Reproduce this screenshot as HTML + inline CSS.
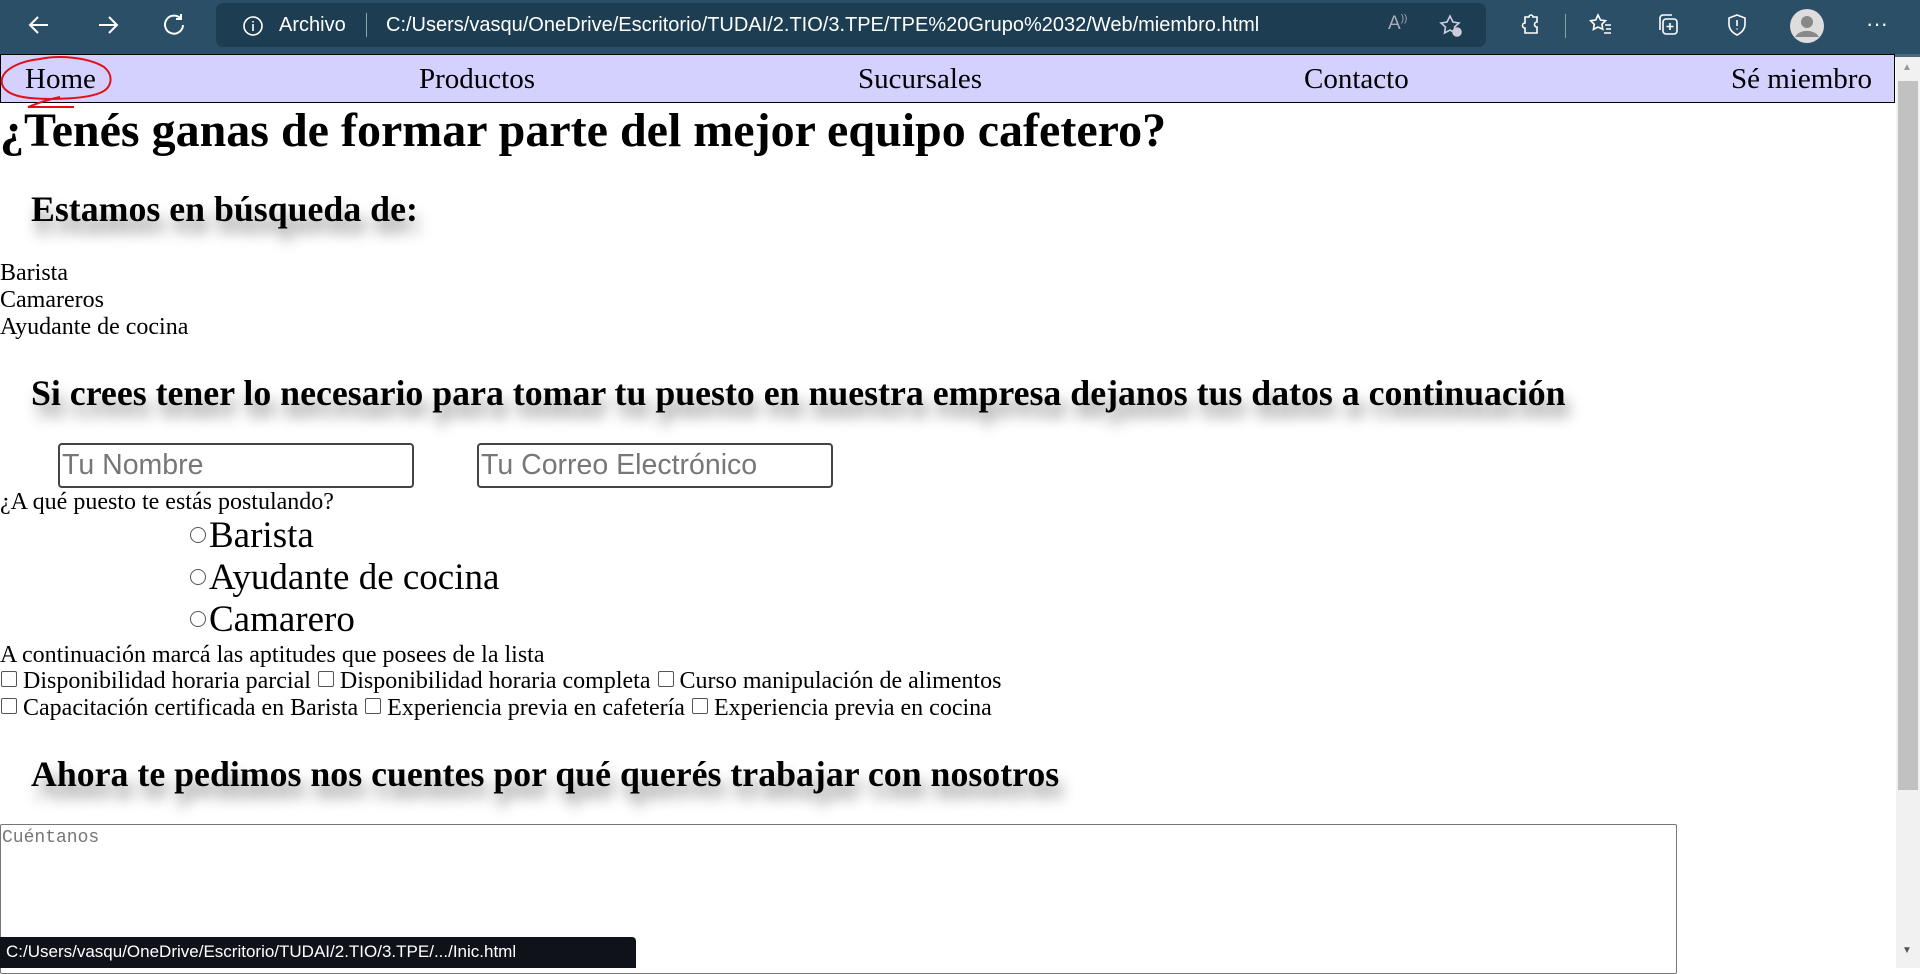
<!DOCTYPE html>
<html><head><meta charset="utf-8"><style>
*{margin:0;padding:0;box-sizing:border-box}
body{width:1920px;height:968px;overflow:hidden;position:relative;background:#fff;font-family:"Liberation Serif",serif;color:#000}
.a{position:absolute;white-space:nowrap}
.chrome{position:absolute;left:0;top:0;width:1920px;height:54px;background:#2c4f68}
.url{position:absolute;left:216px;top:3px;width:1270px;height:44px;background:#1c3d52;border-radius:7px}
.ct{font-family:"Liberation Sans",sans-serif;color:#fff;font-size:19px}
.nav{position:absolute;left:0;top:54px;width:1895px;height:49px;background:#d4d1fe;border:1px solid #000}
.nav span{position:absolute;top:1px;line-height:47px;font-size:29px}
h1{position:absolute;left:0;top:104px;font-size:48px;line-height:54px;white-space:nowrap}
h2{position:absolute;left:31px;font-size:35.8px;line-height:42px;white-space:nowrap;text-shadow:4px 12px 14px rgba(0,0,0,.45)}
.t{position:absolute;left:0;font-size:24px;line-height:27px;white-space:nowrap}
.inp{position:absolute;top:443px;width:356px;height:45px;border:2px solid #444;border-radius:4px;font-family:"Liberation Sans",sans-serif;font-size:28.5px;color:#777;line-height:41px;padding-left:2px}
.r{position:absolute;left:190px;font-size:37px;line-height:42px;white-space:nowrap}
.r i{display:inline-block;width:16px;height:16px;border:1px solid #555;border-radius:50%;margin-right:3px;vertical-align:4px}
.cb{display:inline-block;width:16px;height:16px;border:1px solid #555;border-radius:2px;margin:0 6px 0 1px;vertical-align:1px}
</style></head><body>
<div class="chrome">
<svg class="a" style="left:26px;top:12px" width="26" height="26" viewBox="0 0 26 26" fill="none" stroke="#fff" stroke-width="2"><path d="M22 13H4M12 5l-8 8 8 8"/></svg>
<svg class="a" style="left:95px;top:12px" width="26" height="26" viewBox="0 0 26 26" fill="none" stroke="#fff" stroke-width="2"><path d="M4 13h18M14 5l8 8-8 8"/></svg>
<svg class="a" style="left:161px;top:11px" width="26" height="26" viewBox="0 0 26 26" fill="none" stroke="#fff" stroke-width="2"><path d="M20 8A9 9 0 1 0 22 14M20 3v5h-5"/></svg>
<div class="url">
<svg class="a" style="left:26px;top:12px" width="22" height="22" viewBox="0 0 22 22" fill="none" stroke="#fff" stroke-width="1.6"><circle cx="11" cy="11" r="9"/><path d="M11 9v7M11 6v1.5"/></svg>
<span class="a ct" style="left:63px;top:11px;font-size:20px">Archivo</span>
<span class="a" style="left:150px;top:10px;width:1px;height:24px;background:#8aa"></span>
<span class="a ct" style="left:170px;top:11px;font-size:20px">C:/Users/vasqu/OneDrive/Escritorio/TUDAI/2.TIO/3.TPE/TPE%20Grupo%2032/Web/miembro.html</span>
<span class="a ct" style="left:1172px;top:10px;color:#aab">A<sup style="font-size:10px">))</sup></span>
<svg class="a" style="left:1222px;top:10px" width="26" height="26" viewBox="0 0 26 26" fill="none" stroke="#ccd" stroke-width="1.6"><path d="M12 3l3 6 6 1-4.5 4 1 6-5.5-3-5.5 3 1-6L3 10l6-1z"/><circle cx="19" cy="19" r="4" fill="#ccd"/></svg>
</div>
<svg class="a" style="left:1517px;top:12px" width="26" height="26" viewBox="0 0 26 26" fill="none" stroke="#fff" stroke-width="1.6"><path d="M8 5h4a2 2 0 0 1 4 0h4v5a2 2 0 0 0 0 5v6H8v-5a2 2 0 0 1 0-5z"/></svg>
<span class="a" style="left:1565px;top:14px;width:1px;height:24px;background:#7a9"></span>
<svg class="a" style="left:1588px;top:12px" width="26" height="26" viewBox="0 0 26 26" fill="none" stroke="#fff" stroke-width="1.6"><path d="M10 3l2.5 5 5 .7-3.6 3.5.9 5L10 15l-4.6 2.4.9-5L2.7 8.7l5-.7zM17 13h6M18 17h5M16 21h7"/></svg>
<svg class="a" style="left:1655px;top:12px" width="26" height="26" viewBox="0 0 26 26" fill="none" stroke="#fff" stroke-width="1.6"><rect x="8" y="7" width="14" height="15" rx="3"/><path d="M5 18V6a3 3 0 0 1 3-3h9M15 11v7M11.5 14.5h7"/></svg>
<svg class="a" style="left:1724px;top:12px" width="26" height="26" viewBox="0 0 26 26" fill="none" stroke="#fff" stroke-width="1.6"><path d="M13 3l8 3v6c0 6-4 9-8 11-4-2-8-5-8-11V6z"/><path d="M13 8v6M13 16.5v1"/></svg>
<svg class="a" style="left:1790px;top:9px" width="34" height="34" viewBox="0 0 34 34"><circle cx="17" cy="17" r="17" fill="#ddd"/><circle cx="17" cy="13" r="6" fill="#888"/><path d="M5 28a13 10 0 0 1 24 0z" fill="#888"/></svg>
<span class="a ct" style="left:1866px;top:13px;font-size:22px;line-height:22px">···</span>
</div>
<div class="a" style="left:0;top:54px;width:1920px;height:3px;background:#4b6a80"></div>
<div class="nav">
<span style="left:24px">Home</span>
<span style="left:418px">Productos</span>
<span style="left:857px">Sucursales</span>
<span style="left:1303px">Contacto</span>
<span style="left:1730px">Sé miembro</span>
</div>
<svg class="a" style="left:0;top:55px" width="116" height="56" viewBox="0 0 116 56" fill="none" stroke="#e0101a" stroke-width="2"><path d="M40 4C58 0 88 2 104 12c10 8 8 20-2 25-14 7-50 8-72 6C10 41 0 34 2 24 4 14 20 6 40 4zM60 42c-10 2-22 6-32 10h46"/></svg>
<div class="a" style="left:1896px;top:57px;width:24px;height:911px;background:#f1f1f1"></div>
<div class="a" style="left:1898px;top:81px;width:20px;height:709px;background:#c1c1c1"></div>
<div class="a" style="left:1902px;top:62px;font-size:10px;color:#999;font-family:'Liberation Sans',sans-serif">▲</div>
<div class="a" style="left:1902px;top:945px;font-size:10px;color:#555;font-family:'Liberation Sans',sans-serif">▼</div>

<h1>¿Tenés ganas de formar parte del mejor equipo cafetero?</h1>
<h2 style="top:188px">Estamos en búsqueda de:</h2>
<div class="t" style="top:260px">Barista</div>
<div class="t" style="top:287px">Camareros</div>
<div class="t" style="top:314px">Ayudante de cocina</div>
<h2 style="top:372px">Si crees tener lo necesario para tomar tu puesto en nuestra empresa dejanos tus datos a continuación</h2>
<div class="inp" style="left:58px">Tu Nombre</div>
<div class="inp" style="left:477px">Tu Correo Electrónico</div>
<div class="t" style="top:489px">¿A qué puesto te estás postulando?</div>
<div class="r" style="top:515px"><i></i>Barista</div>
<div class="r" style="top:557px"><i></i>Ayudante de cocina</div>
<div class="r" style="top:599px"><i></i>Camarero</div>
<div class="t" style="top:642px">A continuación marcá las aptitudes que posees de la lista</div>
<div class="t" style="top:668px"><span class="cb"></span>Disponibilidad horaria parcial <span class="cb"></span>Disponibilidad horaria completa <span class="cb"></span>Curso manipulación de alimentos</div>
<div class="t" style="top:695px"><span class="cb"></span>Capacitación certificada en Barista <span class="cb"></span>Experiencia previa en cafetería <span class="cb"></span>Experiencia previa en cocina</div>
<h2 style="top:753px">Ahora te pedimos nos cuentes por qué querés trabajar con nosotros</h2>
<div class="a" style="left:0;top:824px;width:1677px;height:150px;border:1px solid #767676;border-radius:2px"></div>
<div class="a" style="left:2px;top:828px;font-family:'Liberation Mono',monospace;font-size:18px;color:#777">Cuéntanos</div>
<div class="a" style="left:0;top:937px;width:636px;height:31px;background:#10121a;border-radius:0 4px 0 0"></div>
<div class="a" style="left:6px;top:942px;font-family:'Liberation Sans',sans-serif;font-size:17px;color:#fff">C:/Users/vasqu/OneDrive/Escritorio/TUDAI/2.TIO/3.TPE/.../Inic.html</div>
</body></html>
